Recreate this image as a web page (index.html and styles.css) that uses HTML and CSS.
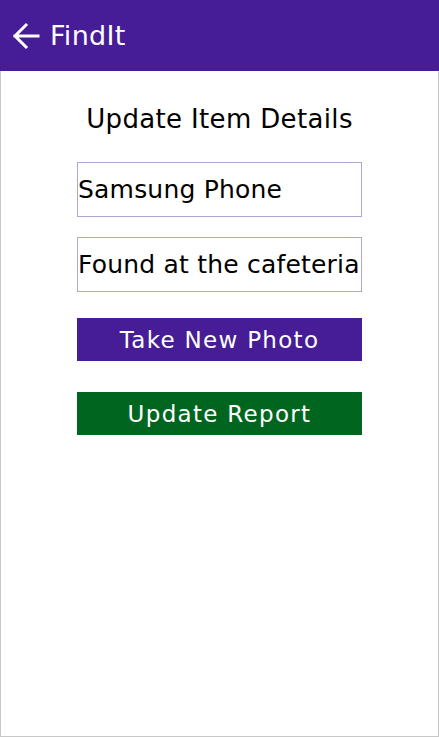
FILE: index.html
```html
<!DOCTYPE html>
<html>
<head>
<meta charset="utf-8">
<link rel="stylesheet" href="styles.css">
</head>
<body>
<div class="app">
  <header class="topbar">
    <svg class="back" width="30" height="30" viewBox="0 0 30 30" aria-hidden="true">
      <path d="M27 15H4M15 4L4 15l11 11" fill="none" stroke="#fff" stroke-width="3" stroke-linecap="square"/>
    </svg>
    <span class="brand">FindIt</span>
  </header>
  <main class="content">
    <h1 class="title">Update Item Details</h1>
    <div class="field">Samsung Phone</div>
    <div class="field">Found at the cafeteria</div>
    <button class="btn btn-purple">Take New Photo</button>
    <button class="btn btn-green">Update Report</button>
  </main>
</div>
</body>
</html>
```
FILE: styles.css
```css
html, body {
  margin: 0;
  padding: 0;
  background: #fff;
}
body {
  font-family: "DejaVu Sans", sans-serif;
}
.app {
  width: 439px;
  height: 737px;
  box-sizing: border-box;
  display: flex;
  flex-direction: column;
}
.topbar {
  height: 71px;
  flex: none;
  background: #461d96;
  display: flex;
  align-items: center;
  padding-left: 11px;
  gap: 9px;
  color: #fff;
}
.back {
  display: block;
}
.brand {
  font-size: 27px;
  line-height: 1;
  letter-spacing: 0.3px;
}
.content {
  flex: 1;
  border: 1px solid #c8c8c8;
  border-top: none;
  display: flex;
  flex-direction: column;
  align-items: center;
  padding-top: 30px;
}
.title {
  margin: 0;
  font-weight: normal;
  font-size: 26px;
  letter-spacing: 0.35px;
  line-height: 36px;
  color: #000;
}
.field {
  margin-top: 25px;
  width: 285px;
  height: 55px;
  box-sizing: border-box;
  border: 1px solid #aea6d2;
  display: flex;
  align-items: center;
  font-size: 25px;
  letter-spacing: 0.2px;
  color: #000;
  white-space: nowrap;
  overflow: hidden;
  padding-left: 0;
}
.field + .field {
  margin-top: 20px;
}
.btn {
  margin-top: 26px;
  width: 285px;
  height: 43px;
  border: none;
  font-family: "DejaVu Sans", sans-serif;
  font-size: 23px;
  color: #fff;
  letter-spacing: 1.3px;
  padding: 0;
}
.btn-purple {
  background: #461d96;
}
.btn-green {
  background: #00661f;
  margin-top: 31px;
}
```
